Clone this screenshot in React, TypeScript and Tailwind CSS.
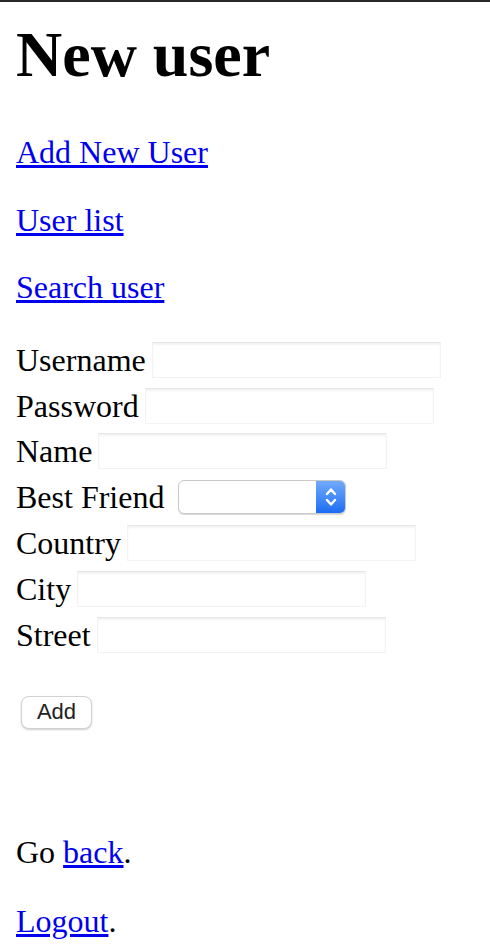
import React from "react";

const serif = { fontFamily: '"Liberation Serif", "Times New Roman", serif' };

function Field({ label }: { label: string }) {
  return (
    <div className="flex items-center h-[45.8px]">
      <span className="leading-[36px] whitespace-pre">{label}</span>
      <input
        type="text"
        className="ml-[6px] w-[289px] h-[36px] bg-white outline-none border border-[#f3f3f3] border-t-[#e6e6e6] shadow-[inset_0_2px_2px_rgba(0,0,0,0.05)]"
      />
    </div>
  );
}

export default function App() {
  return (
    <div className="bg-white min-h-[950px] text-black text-[32px]" style={serif}>
      <div className="h-[2px] bg-[#2a2a2a]" />
      <div className="px-4">
        <h1 className="text-[64px] font-bold leading-[74px] mt-4">New user</h1>
        <p className="leading-[36px] mt-[42px]">
          <a href="#" className="text-[#0000ee] underline">Add New User</a>
        </p>
        <p className="leading-[36px] mt-[31.5px]">
          <a href="#" className="text-[#0000ee] underline">User list</a>
        </p>
        <p className="leading-[36px] mt-[31.5px]">
          <a href="#" className="text-[#0000ee] underline">Search user</a>
        </p>
        <form className="mt-[32px]" onSubmit={(e) => e.preventDefault()}>
          <Field label="Username" />
          <Field label="Password" />
          <Field label="Name" />
          <div className="flex items-center h-[45.8px]">
            <span className="leading-[36px] whitespace-pre">Best Friend</span>
            <div className="ml-[14px] w-[168px] h-[34px] rounded-[6px] border border-[#c9c9c9] bg-white shadow-[0_1px_1px_rgba(0,0,0,0.15)] flex justify-end overflow-hidden">
              <div className="w-[29px] h-full bg-gradient-to-b from-[#6fa9f9] to-[#1a6cf4] flex items-center justify-center">
                <svg width="14" height="24" viewBox="0 0 14 24" fill="none" stroke="white" strokeWidth="2.4" strokeLinecap="round" strokeLinejoin="round">
                  <path d="M3 9 L7 4.5 L11 9" />
                  <path d="M3 15 L7 19.5 L11 15" />
                </svg>
              </div>
            </div>
          </div>
          <Field label="Country" />
          <Field label="City" />
          <Field label="Street" />
          <div className="flex mt-[38px]">
            <button
              type="submit"
              className="ml-[5px] w-[71px] h-[33px] rounded-[8px] border border-[#d2d2d2] bg-white shadow-[0_1px_2px_rgba(0,0,0,0.2)] text-[22px] leading-none text-[#222]"
              style={{ fontFamily: '"Liberation Sans", Arial, sans-serif' }}
            >
              Add
            </button>
          </div>
        </form>
        <p className="leading-[36px] mt-[105px]">
          Go <a href="#" className="text-[#0000ee] underline">back</a>.
        </p>
        <p className="leading-[36px] mt-[33px]">
          <a href="#" className="text-[#0000ee] underline">Logout</a>.
        </p>
      </div>
    </div>
  );
}
